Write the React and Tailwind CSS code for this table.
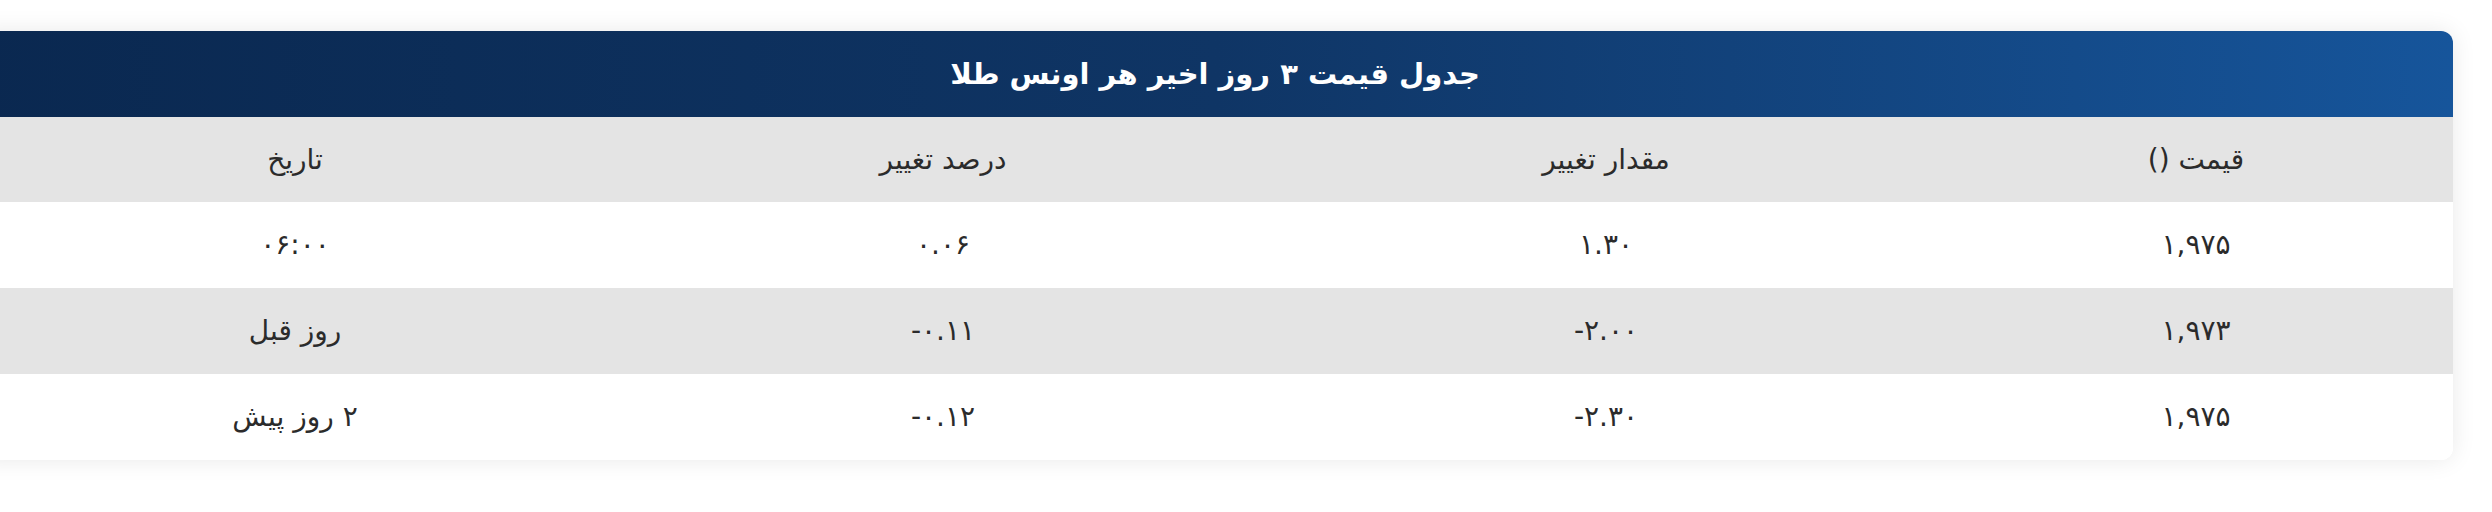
import React from "react";

const rows = [
  { price: "۱,۹۷۵", change: "۱.۳۰", percent: "۰.۰۶", date: "۰۶:۰۰" },
  { price: "۱,۹۷۳", change: "-۲.۰۰", percent: "-۰.۱۱", date: "روز قبل" },
  { price: "۱,۹۷۵", change: "-۲.۳۰", percent: "-۰.۱۲", date: "۲ روز پیش" },
];

const grid = "grid grid-cols-[514px_666px_660px_636px]";

export default function App() {
  return (
    <div
      dir="rtl"
      className="w-[2492px] h-[512px] overflow-hidden bg-white pt-[31px]"
      style={{ fontFamily: '"DejaVu Sans", "Noto Sans", sans-serif' }}
    >
      <div className="mr-[39px] w-[2476px] rounded-[12px] bg-white shadow-[0_0_24px_rgba(0,0,0,0.09)] overflow-hidden">
        <div className="h-[86px] flex items-center justify-center bg-gradient-to-r from-[#0a2850] via-[#0f3565] to-[#16559b]">
          <span className="text-white font-bold text-[29px] leading-none">جدول قیمت ۳ روز اخیر هر اونس طلا</span>
        </div>
        <div className={`${grid} h-[85px] bg-[#e4e4e4] text-[#2b2b2b] text-[28px] items-center text-center`}>
          <div>قیمت ()</div>
          <div>مقدار تغییر</div>
          <div>درصد تغییر</div>
          <div>تاریخ</div>
        </div>
        {rows.map((r, i) => (
          <div
            key={i}
            className={`${grid} h-[86px] ${i % 2 === 1 ? "bg-[#e4e4e4]" : "bg-white"} text-[#2b2b2b] text-[28px] items-center text-center`}
          >
            <div>{r.price}</div>
            <div dir="ltr">{r.change}</div>
            <div dir="ltr">{r.percent}</div>
            <div>{r.date}</div>
          </div>
        ))}
      </div>
    </div>
  );
}
